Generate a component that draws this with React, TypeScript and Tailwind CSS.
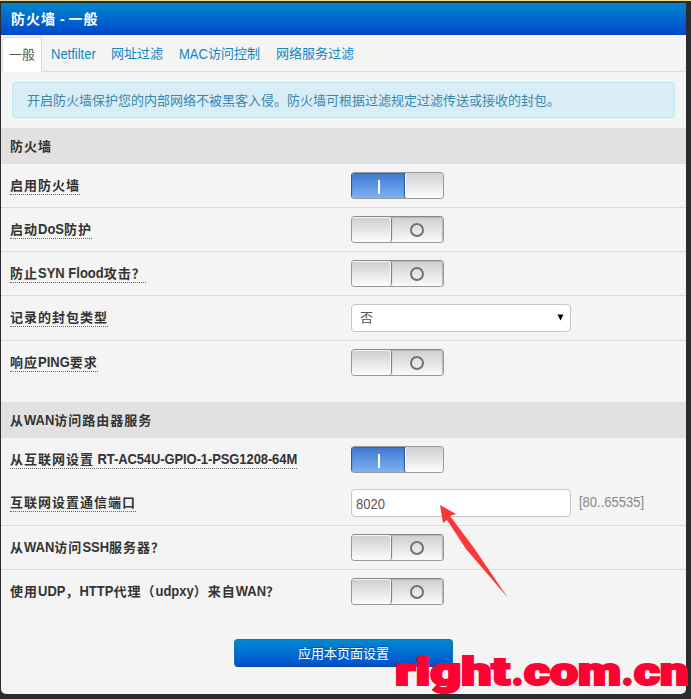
import type { ReactNode } from "react";

// Splits mixed text so that Latin runs are drawn slightly taller than the
// wide characters; in bold labels the wide ones get an extra pixel of tracking.
function Mixed({ children, bold = false }: { children: string; bold?: boolean }) {
  const parts = children.match(/[\u3000-\uffff]+|[^\u3000-\uffff]+/g) ?? [];
  return (
    <>
      {parts.map((part, i) =>
        /[\u3000-\uffff]/.test(part) ? (
          <span key={i} className={bold ? "tracking-[1px]" : ""}>
            {part}
          </span>
        ) : (
          <span
            key={i}
            className={`inline-block scale-y-[1.1] whitespace-pre ${bold ? "origin-[0_76%]" : "origin-[0_45%]"} ${part.length > 20 ? "tracking-[-0.1px]" : ""}`}
          >
            {part}
          </span>
        ),
      )}
    </>
  );
}

function Toggle({ on = false }: { on?: boolean }) {
  if (on) {
    return (
      <div className="flex h-[27px] w-[93px] overflow-hidden rounded-[4px] border border-[#999] border-l-[#2c5a9e]">
        <div className="-my-px flex w-[53px] items-center justify-center border-y border-t-[#2f5da3] border-b-[#4c7fc8] bg-linear-to-b from-[#3d78d0] to-[#7eb1f3] shadow-[inset_0_1px_1px_#2f66b8]">
          <div className="mt-[2px] h-[14px] w-[2px] bg-white" />
        </div>
        <div className="flex-1 rounded-l-[3px] border-l border-white bg-linear-to-b from-[#cfcfcf] to-[#fdfdfd] shadow-[-1px_0_1px_#24569b]" />
      </div>
    );
  }
  return (
    <div className="flex h-[27px] w-[93px] overflow-hidden rounded-[4px] border border-[#999] border-t-[#888]">
      <div className="z-10 w-[39px] rounded-r-[3px] border-t border-r border-[#f5f5f5] bg-linear-to-b from-[#cfcfcf] to-[#fdfdfd] shadow-[1px_0_1px_#777]" />
      <div className="flex flex-1 items-center justify-center bg-linear-to-b from-[#cfcfcf] to-[#fafafa] shadow-[inset_-1px_1px_1px_#b5b5b5]">
        <div className="mt-px mr-px h-[14px] w-[14px] rounded-full border-2 border-[#727272]" />
      </div>
    </div>
  );
}

function Section({ title }: { title: string }) {
  return (
    <div className="h-[36px] border-y border-[#dcdcdc] bg-[#e1e1e1] pl-[9px] text-[13px] leading-[35px] font-bold text-[#333]">
      <Mixed bold>{title}</Mixed>
    </div>
  );
}

function Row({
  label,
  children,
  height = "h-[44px]",
  hint = true,
  line = true,
}: {
  label: string;
  children: ReactNode;
  height?: string;
  hint?: boolean;
  line?: boolean;
}) {
  return (
    <div className={`flex items-start pt-[8px] ${height} ${line ? "border-b border-[#dadada]" : ""}`}>
      <div className="w-[350px] shrink-0 pt-[5px] pl-[9px] text-[13px] leading-[18px] font-bold whitespace-nowrap text-[#333]">
        <span className={`inline-block h-[18px] ${hint ? "border-b border-dotted border-[#666]" : ""}`}>
          <Mixed bold>{label}</Mixed>
        </span>
      </div>
      {children}
    </div>
  );
}

const tabs = [
  { name: "Netfilter", width: "w-[60px]" },
  { name: "网址过滤", width: "w-[68px]" },
  { name: "MAC访问控制", width: "w-[97px]" },
  { name: "网络服务过滤", width: "w-[90px]" },
];

const brand = [
  { text: "right", x: 5, width: 115 },
  { text: ".", x: 122, width: 11 },
  { text: "com", x: 134, width: 97 },
  { text: ".", x: 232, width: 11 },
  { text: "cn", x: 244, width: 54 },
];

export default function App() {
  return (
    <div className="relative h-[699px] w-[691px] overflow-hidden border-t border-[#eadf9f] bg-[#2b2b2b] pt-[2px] font-['Liberation_Sans','Noto_Sans_CJK_SC',sans-serif]">
      <main className="ml-px h-[691px] w-[685px] overflow-hidden rounded-b-[5px] bg-[#f4f4f4]">
        <header className="h-[32px] bg-linear-to-b from-[#0186cb] to-[#0044cc] pl-[10px] text-[14px] leading-[33px] font-bold text-white">
          <Mixed bold>防火墙 - 一般</Mixed>
        </header>

        <nav className="flex h-[37px] items-end border-b border-[#ddd] pl-px text-[13px] text-[#0f86c2]">
          <div className="-mb-px h-[35px] w-[40px] rounded-t-[4px] border border-b-0 border-[#ddd] bg-white pl-[6px] leading-[34px] whitespace-nowrap text-[#555]">
            一般
          </div>
          {tabs.map((tab) => (
            <div key={tab.name} className={`h-[35px] pl-[9px] leading-[36px] whitespace-nowrap ${tab.width}`}>
              <Mixed>{tab.name}</Mixed>
            </div>
          ))}
        </nav>

        <div className="mx-[11px] mt-[10px] mb-[10px] h-[36px] rounded-[4px] border border-[#bce8f1] bg-[#d9edf7] pl-[14px] text-[13px] leading-[35px] whitespace-nowrap text-[#3a87ad]">
          开启防火墙保护您的内部网络不被黑客入侵。防火墙可根据过滤规定过滤传送或接收的封包。
        </div>

        <Section title="防火墙" />
        <Row label="启用防火墙"><Toggle on /></Row>
        <Row label="启动DoS防护"><Toggle /></Row>
        <Row label="防止SYN Flood攻击？"><Toggle /></Row>
        <Row label="记录的封包类型" height="h-[45px]">
          <div className="flex h-[28px] w-[220px] items-center justify-between rounded-[4px] border border-[#c6c6c6] bg-white pr-[6px] pl-[8px] text-[13px] text-[#555]">
            <span>否</span>
            <svg width="7" height="7" viewBox="0 0 7 7" className="-mt-px">
              <path d="M0.5 0.5H6.5L3.5 6.5Z" fill="#000" />
            </svg>
          </div>
        </Row>
        <Row label="响应PING要求" height="h-[61px]" line={false}><Toggle /></Row>

        <Section title="从WAN访问路由器服务" />
        <Row label="从互联网设置 RT-AC54U-GPIO-1-PSG1208-64M" height="h-[43px]" line={false}><Toggle on /></Row>
        <Row label="互联网设置通信端口" height="h-[45px]">
          <div className="h-[28px] w-[220px] rounded-[4px] border border-[#c6c6c6] bg-white pl-[4px] text-[13px] leading-[27px] text-[#555]">
            <Mixed>8020</Mixed>
          </div>
          <div className="pl-[8px] text-[13px] leading-[25px] text-[#888]"><Mixed>[80..65535]</Mixed></div>
        </Row>
        <Row label="从WAN访问SSH服务器？" hint={false}><Toggle /></Row>
        <Row label="使用UDP，HTTP代理（udpxy）来自WAN？" hint={false} line={false}><Toggle /></Row>

        <div className="mt-[25px] ml-[233px] h-[28px] w-[219px] rounded-[4px] border border-[#0877bd] border-b-[#0744a4] bg-linear-to-b from-[#0287d2] to-[#0450ce] text-center text-[13px] leading-[27px] text-white [text-shadow:0_-1px_0_#0004]">
          应用本页面设置
        </div>
      </main>

      <svg className="absolute top-[501px] left-[438px]" width="74" height="98" viewBox="0 0 74 98">
        <path d="M2 3L18 12L12 14L36 46L70 96L28 47L9 18L5 21Z" fill="#fb3838" />
      </svg>
      <svg className="absolute top-[647px] left-[390px]" width="301" height="51" viewBox="0 0 301 51">
        {brand.map((part) => (
          <text
            key={part.x}
            x={part.x}
            y="36.5"
            textLength={part.width}
            lengthAdjust="spacingAndGlyphs"
            className="fill-[#ff0033] stroke-[#ff0033] stroke-[2.2] font-['Roboto','Liberation_Sans',sans-serif] text-[38px] font-black"
          >
            {part.text}
          </text>
        ))}
      </svg>
    </div>
  );
}
